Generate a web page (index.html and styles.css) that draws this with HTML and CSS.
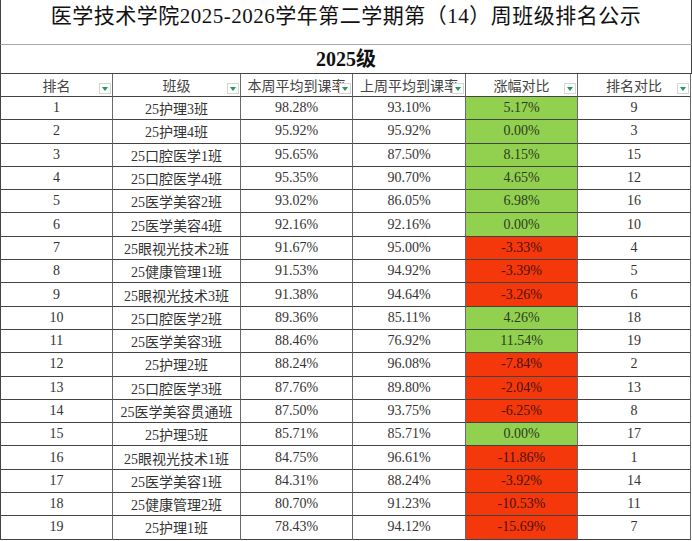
FILE: index.html
```html
<!DOCTYPE html>
<html lang="zh-CN">
<head>
<meta charset="utf-8">
<title>周班级排名公示</title>
<link rel="stylesheet" href="styles.css">
</head>
<body>
<div class="sheet">
  <div class="title">医学技术学院2025-2026学年第二学期第（14）周班级排名公示</div>
  <div class="grade">2025级</div>
  <div class="grid">
    <div class="hd">排名<span class="filter"></span></div>
    <div class="hd">班级<span class="filter"></span></div>
    <div class="hd">本周平均到课率<span class="filter"></span></div>
    <div class="hd">上周平均到课率<span class="filter"></span></div>
    <div class="hd">涨幅对比<span class="filter"></span></div>
    <div class="hd">排名对比<span class="filter"></span></div>

    <div class="c">1</div><div class="c">25护理3班</div><div class="c">98.28%</div><div class="c">93.10%</div><div class="c up">5.17%</div><div class="c">9</div>
    <div class="c">2</div><div class="c">25护理4班</div><div class="c">95.92%</div><div class="c">95.92%</div><div class="c up">0.00%</div><div class="c">3</div>
    <div class="c">3</div><div class="c">25口腔医学1班</div><div class="c">95.65%</div><div class="c">87.50%</div><div class="c up">8.15%</div><div class="c">15</div>
    <div class="c">4</div><div class="c">25口腔医学4班</div><div class="c">95.35%</div><div class="c">90.70%</div><div class="c up">4.65%</div><div class="c">12</div>
    <div class="c">5</div><div class="c">25医学美容2班</div><div class="c">93.02%</div><div class="c">86.05%</div><div class="c up">6.98%</div><div class="c">16</div>
    <div class="c">6</div><div class="c">25医学美容4班</div><div class="c">92.16%</div><div class="c">92.16%</div><div class="c up">0.00%</div><div class="c">10</div>
    <div class="c">7</div><div class="c">25眼视光技术2班</div><div class="c">91.67%</div><div class="c">95.00%</div><div class="c down">-3.33%</div><div class="c">4</div>
    <div class="c">8</div><div class="c">25健康管理1班</div><div class="c">91.53%</div><div class="c">94.92%</div><div class="c down">-3.39%</div><div class="c">5</div>
    <div class="c">9</div><div class="c">25眼视光技术3班</div><div class="c">91.38%</div><div class="c">94.64%</div><div class="c down">-3.26%</div><div class="c">6</div>
    <div class="c">10</div><div class="c">25口腔医学2班</div><div class="c">89.36%</div><div class="c">85.11%</div><div class="c up">4.26%</div><div class="c">18</div>
    <div class="c">11</div><div class="c">25医学美容3班</div><div class="c">88.46%</div><div class="c">76.92%</div><div class="c up">11.54%</div><div class="c">19</div>
    <div class="c">12</div><div class="c">25护理2班</div><div class="c">88.24%</div><div class="c">96.08%</div><div class="c down">-7.84%</div><div class="c">2</div>
    <div class="c">13</div><div class="c">25口腔医学3班</div><div class="c">87.76%</div><div class="c">89.80%</div><div class="c down">-2.04%</div><div class="c">13</div>
    <div class="c">14</div><div class="c">25医学美容贯通班</div><div class="c">87.50%</div><div class="c">93.75%</div><div class="c down">-6.25%</div><div class="c">8</div>
    <div class="c">15</div><div class="c">25护理5班</div><div class="c">85.71%</div><div class="c">85.71%</div><div class="c up">0.00%</div><div class="c">17</div>
    <div class="c">16</div><div class="c">25眼视光技术1班</div><div class="c">84.75%</div><div class="c">96.61%</div><div class="c down">-11.86%</div><div class="c">1</div>
    <div class="c">17</div><div class="c">25医学美容1班</div><div class="c">84.31%</div><div class="c">88.24%</div><div class="c down">-3.92%</div><div class="c">14</div>
    <div class="c">18</div><div class="c">25健康管理2班</div><div class="c">80.70%</div><div class="c">91.23%</div><div class="c down">-10.53%</div><div class="c">11</div>
    <div class="c">19</div><div class="c">25护理1班</div><div class="c">78.43%</div><div class="c">94.12%</div><div class="c down">-15.69%</div><div class="c">7</div>
  </div>
</div>
</body>
</html>
```

FILE: styles.css
```css
html, body {
  margin: 0;
  padding: 0;
  background: #ffffff;
}

.sheet {
  width: 692px;
  font-family: "Liberation Serif", "Noto Sans CJK SC", serif;
  color: #333333;
}

.title {
  box-sizing: border-box;
  height: 45px;
  border-left: 1px solid #444444;
  border-right: 1px solid #444444;
  border-bottom: 1px solid #a8a8a8;
  text-align: center;
  font-size: 21px;
  letter-spacing: 0.5px;
  line-height: 32px;
  color: #111111;
  white-space: nowrap;
}

.grade {
  box-sizing: border-box;
  height: 29px;
  border-left: 1px solid #444444;
  border-right: 1px solid #444444;
  border-bottom: 1px solid #444444;
  text-align: center;
  font-size: 20px;
  font-weight: bold;
  line-height: 28px;
  color: #111111;
}

.grid {
  display: grid;
  grid-template-columns: 113px 128px 112px 113px 112px 113px;
  grid-template-rows: 23px;
  grid-auto-rows: 23.3px;
}

.hd,
.c {
  box-sizing: border-box;
  border-right: 1px solid #6a6a6a;
  border-bottom: 1px solid #444444;
  display: flex;
  align-items: center;
  justify-content: center;
  white-space: nowrap;
  overflow: hidden;
  font-size: 14px;
}

.grid > :nth-child(6n + 1) {
  border-left: 1px solid #444444;
}

.hd {
  position: relative;
  color: #444444;
  font-size: 14px;
}

.filter {
  position: absolute;
  right: 1px;
  bottom: 2px;
  width: 12px;
  height: 11px;
  box-sizing: border-box;
  border: 1px solid #d6d6d6;
  background: #ffffff;
}

.filter::after {
  content: "";
  position: absolute;
  left: 2px;
  top: 3px;
  border-left: 3px solid transparent;
  border-right: 3px solid transparent;
  border-top: 4px solid #1f9a5c;
}

.c {
  color: #333333;
}

.up {
  background: #92d050;
  color: #2e3a20;
}

.down {
  background: #f4380c;
  color: #4a1206;
}
```
